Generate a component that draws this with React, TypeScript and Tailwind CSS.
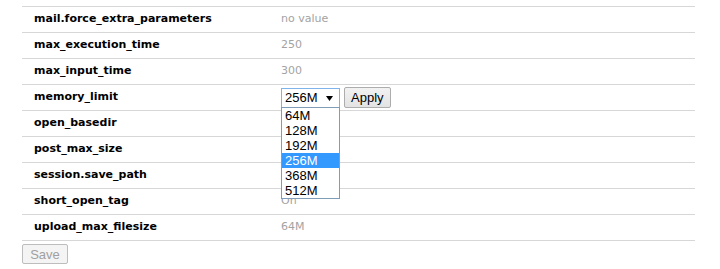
const settings: { name: string; value: string }[] = [
  { name: 'mail.force_extra_parameters', value: 'no value' },
  { name: 'max_execution_time', value: '250' },
  { name: 'max_input_time', value: '300' },
  { name: 'memory_limit', value: '' },
  { name: 'open_basedir', value: '' },
  { name: 'post_max_size', value: '' },
  { name: 'session.save_path', value: '' },
  { name: 'short_open_tag', value: 'On' },
  { name: 'upload_max_filesize', value: '64M' },
];

const options = ['64M', '128M', '192M', '256M', '368M', '512M'];

function MemorySelect() {
  return (
    <div className="relative flex items-center gap-[4px]">
      <div className="relative">
        <div className="flex h-[20px] w-[59px] items-center justify-between border border-[#7eb4ea] bg-white pl-[3px] pr-[6px] font-['Liberation_Sans',Arial,sans-serif] text-[13px] text-black">
          <span>256M</span>
          <svg width="7" height="5" viewBox="0 0 7 5" className="mt-[1px]">
            <path d="M0 0h7L3.5 5z" fill="#000" />
          </svg>
        </div>
        <ul className="absolute left-0 top-[19px] z-10 w-[59px] border border-[#7f9db9] bg-white font-['Liberation_Sans',Arial,sans-serif] text-[13px] leading-[15px] text-black">
          {options.map((o) => (
            <li
              key={o}
              className={o === '256M' ? 'bg-[#3399ff] pl-[3px] text-white' : 'pl-[3px]'}
            >
              {o}
            </li>
          ))}
        </ul>
      </div>
      <button className="h-[21px] rounded-[2px] border border-[#adadad] bg-gradient-to-b from-[#f2f2f2] to-[#e3e3e3] px-[6px] font-['Liberation_Sans',Arial,sans-serif] text-[13px] text-black">
        Apply
      </button>
    </div>
  );
}

export default function App() {
  return (
    <div className="h-[269px] w-[720px] overflow-hidden bg-white">
      <div className="ml-[22px] w-[673px] pt-[6px]">
        <div className="border-b border-[#d7d7d7]">
          {settings.map((s) => (
            <div key={s.name} className="flex h-[26px] items-center border-t border-[#d7d7d7]">
              <div className="w-[259px] pl-[12px] font-['DejaVu_Sans',Verdana,sans-serif] text-[11px] font-bold text-black">
                {s.name}
              </div>
              <div className="flex-1 font-['DejaVu_Sans',Verdana,sans-serif] text-[11px] text-[#a3a3a3]">
                {s.name === 'memory_limit' ? <MemorySelect /> : s.value}
              </div>
            </div>
          ))}
        </div>
        <button
          disabled
          className="h-[20px] w-[46px] rounded-[2px] border border-[#bdbdbd] bg-[#f4f4f4] font-['Liberation_Sans',Arial,sans-serif] text-[13px] text-[#a0a0a0]"
        >
          Save
        </button>
      </div>
      <div className="mt-[6px] h-[4px] w-full bg-[#f4f4f4]" />
    </div>
  );
}
